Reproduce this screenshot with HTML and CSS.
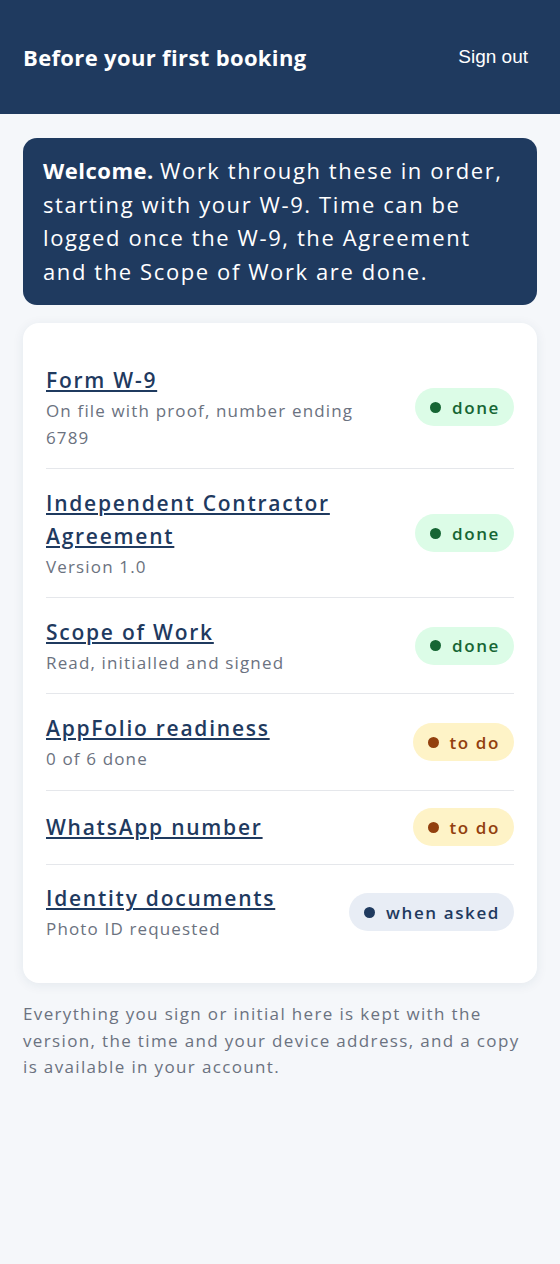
FILE: index.html
```html
<!DOCTYPE html>
<html lang="en">
<head>
<meta charset="utf-8">
<title>Before your first booking</title>
<link rel="stylesheet" href="styles.css">
</head>
<body>
<header class="topbar">
  <h1 class="topbar-title">Before your first booking</h1>
  <button class="signout" type="button">Sign out</button>
</header>
<main class="content">
  <section class="welcome">
    <p><strong>Welcome. </strong>Work through these in order, starting with your W-9. Time can be logged once the W-9, the Agreement and the Scope of Work are done.</p>
  </section>
  <section class="card">
    <ul class="steps">
      <li class="step">
        <div class="step-text">
          <a class="step-title" href="#">Form W-9</a>
          <p class="step-sub">On file with proof, number ending 6789</p>
        </div>
        <span class="badge badge-done"><span class="dot"></span>done</span>
      </li>
      <li class="step">
        <div class="step-text">
          <a class="step-title" href="#">Independent Contractor Agreement</a>
          <p class="step-sub">Version 1.0</p>
        </div>
        <span class="badge badge-done"><span class="dot"></span>done</span>
      </li>
      <li class="step">
        <div class="step-text">
          <a class="step-title" href="#">Scope of Work</a>
          <p class="step-sub">Read, initialled and signed</p>
        </div>
        <span class="badge badge-done"><span class="dot"></span>done</span>
      </li>
      <li class="step">
        <div class="step-text">
          <a class="step-title" href="#">AppFolio readiness</a>
          <p class="step-sub">0 of 6 done</p>
        </div>
        <span class="badge badge-todo"><span class="dot"></span>to do</span>
      </li>
      <li class="step">
        <div class="step-text">
          <a class="step-title" href="#">WhatsApp number</a>
        </div>
        <span class="badge badge-todo"><span class="dot"></span>to do</span>
      </li>
      <li class="step">
        <div class="step-text">
          <a class="step-title" href="#">Identity documents</a>
          <p class="step-sub">Photo ID requested</p>
        </div>
        <span class="badge badge-asked"><span class="dot"></span>when asked</span>
      </li>
    </ul>
  </section>
  <p class="footnote">Everything you sign or initial here is kept with the version, the time and your device address, and a copy is available in your account.</p>
</main>
</body>
</html>
```
FILE: styles.css
```css
* { box-sizing: border-box; }
html, body { margin: 0; padding: 0; }
body {
  background: #f5f7fa;
  font-family: "Open Sans", "DejaVu Sans", sans-serif;
  color: #1f3a5f;
  min-height: 1264px;
}
.topbar {
  background: #1f3a5f;
  height: 114px;
  padding: 0 24px 0 23px;
  display: flex;
  align-items: center;
  justify-content: space-between;
}
.topbar-title {
  margin: 0;
  color: #ffffff;
  font-size: 22px;
  font-weight: 700;
  letter-spacing: 0.35px;
}
.signout {
  background: transparent;
  border: 0;
  color: #ffffff;
  font-family: "Liberation Sans", Arial, sans-serif;
  font-size: 19px;
  padding: 6px 8px;
  cursor: pointer;
}
.content {
  padding: 24px 23px;
}
.welcome {
  background: #1f3a5f;
  border-radius: 14px;
  padding: 16px 20px 17px 20px;
  color: #ffffff;
}
.welcome p {
  margin: 0;
  font-size: 22px;
  line-height: 33.5px;
  letter-spacing: 1.6px;
}
.welcome strong { font-weight: 700; letter-spacing: 0.5px; }
.card {
  margin-top: 18px;
  background: #ffffff;
  border-radius: 16px;
  padding: 23px 23px 23px;
  box-shadow: 0 2px 12px rgba(31, 58, 95, 0.08);
}
.steps {
  list-style: none;
  margin: 0;
  padding: 0;
}
.step {
  display: flex;
  align-items: center;
  justify-content: space-between;
  gap: 20px;
  padding: 17.6px 0;
  border-top: 1px solid #e5e7eb;
}
.step:first-child { border-top: 0; padding-top: 17.5px; }
.step-text { flex: 1; min-width: 0; max-width: 340px; }
.step-title {
  display: inline;
  color: #1f3a5f;
  font-size: 21px;
  line-height: 33px;
  font-weight: 600;
  letter-spacing: 1.75px;
  text-decoration: underline;
  text-decoration-thickness: 2px;
  text-underline-offset: 2px;
}
.step-sub {
  margin: 0;
  color: #6b7280;
  font-size: 17px;
  line-height: 27px;
  letter-spacing: 1.15px;
}
.badge {
  flex: none;
  display: inline-flex;
  align-items: center;
  gap: 11px;
  height: 38px;
  padding: 0 14px 0 15px;
  border-radius: 19px;
  font-size: 17px;
  font-weight: 600;
  letter-spacing: 1.6px;
}
.dot {
  width: 11px;
  height: 11px;
  border-radius: 50%;
  background: currentColor;
}
.badge-done { background: #dcfce7; color: #166534; }
.badge-todo { background: #fef3c7; color: #92400e; }
.badge-asked { background: #e8edf5; color: #1f3a5f; }
.footnote {
  margin: 18px 0 0;
  color: #6b7280;
  font-size: 17px;
  line-height: 26.5px;
  letter-spacing: 1.35px;
}
```
